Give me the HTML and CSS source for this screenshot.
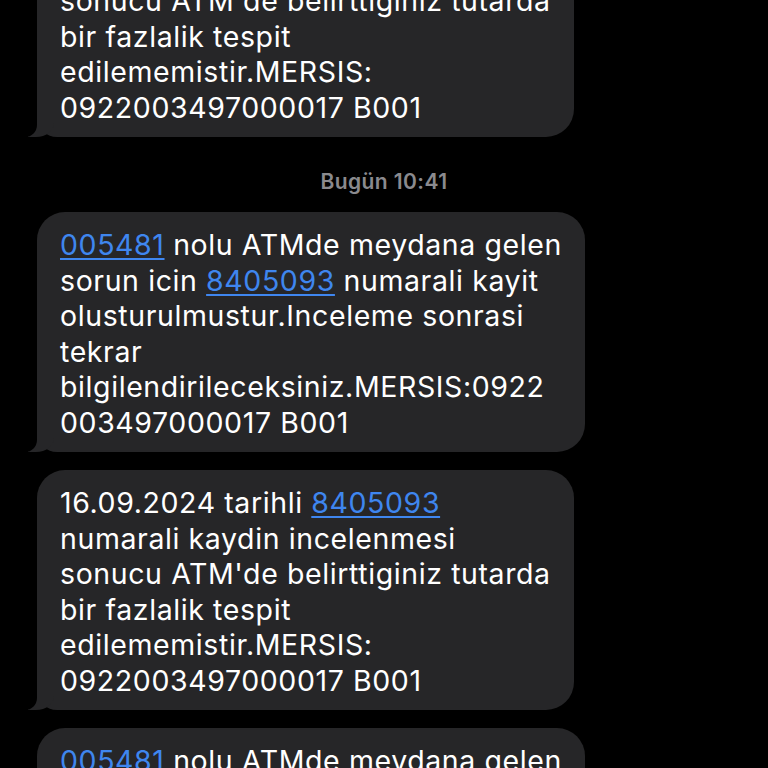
FILE: index.html
```html
<!DOCTYPE html>
<html lang="tr">
<head>
<meta charset="utf-8">
<title>Mesajlar</title>
<link rel="stylesheet" href="styles.css">
</head>
<body>
<div class="thread">
  <div class="bubble">
    16.09.2024 tarihli <a class="link" href="#">8405093</a><br>
    numarali kaydin incelenmesi<br>
    sonucu ATM'de belirttiginiz tutarda<br>
    bir fazlalik tespit<br>
    edilememistir.MERSIS:<br>
    0922003497000017 B001
  </div>
  <div class="stamp">Bugün 10:41</div>
  <div class="bubble">
    <a class="link" href="#">005481</a> nolu ATMde meydana gelen<br>
    sorun icin <a class="link" href="#">8405093</a> numarali kayit<br>
    olusturulmustur.Inceleme sonrasi<br>
    tekrar<br>
    bilgilendirileceksiniz.MERSIS:0922<br>
    003497000017 B001
  </div>
  <div class="bubble">
    16.09.2024 tarihli <a class="link" href="#">8405093</a><br>
    numarali kaydin incelenmesi<br>
    sonucu ATM'de belirttiginiz tutarda<br>
    bir fazlalik tespit<br>
    edilememistir.MERSIS:<br>
    0922003497000017 B001
  </div>
  <div class="bubble">
    <a class="link" href="#">005481</a> nolu ATMde meydana gelen<br>
    sorun icin <a class="link" href="#">8405093</a> numarali kayit<br>
    olusturulmustur.Inceleme sonrasi<br>
    tekrar<br>
    bilgilendirileceksiniz.MERSIS:0922<br>
    003497000017 B001
  </div>
</div>
</body>
</html>
```

FILE: styles.css
```css
html, body {
  margin: 0;
  padding: 0;
  background: #000;
  height: 768px;
  overflow: hidden;
}

.thread {
  display: flex;
  flex-direction: column;
  align-items: flex-start;
  gap: 18px;
  margin-top: -103px;
  font-family: Inter, "Liberation Sans", Arial, sans-serif;
}

.bubble {
  position: relative;
  margin-left: 37px;
  background: #262628;
  color: #fff;
  font-size: 28.5px;
  letter-spacing: 0.6px;
  line-height: 35.5px;
  padding: 15px 23px 12px 23px;
  border-radius: 28px;
  border-bottom-left-radius: 20px;
  white-space: nowrap;
}

.bubble::before {
  content: "";
  position: absolute;
  left: -9px;
  bottom: 0;
  width: 26px;
  height: 26px;
  background: #262628;
  border-bottom-right-radius: 18px 14px;
}

.bubble::after {
  content: "";
  position: absolute;
  left: -28px;
  bottom: 0;
  width: 28px;
  height: 28px;
  background: #000;
  border-bottom-right-radius: 12px;
}

.link {
  color: #3f86ef;
  text-decoration: underline;
  text-decoration-thickness: 2px;
  text-underline-offset: 3px;
}

.stamp {
  align-self: center;
  margin: 16px 0 1px 0;
  color: #8a8a8e;
  font-size: 21px;
  letter-spacing: 0.4px;
  font-weight: 600;
  line-height: 22px;
}
```
